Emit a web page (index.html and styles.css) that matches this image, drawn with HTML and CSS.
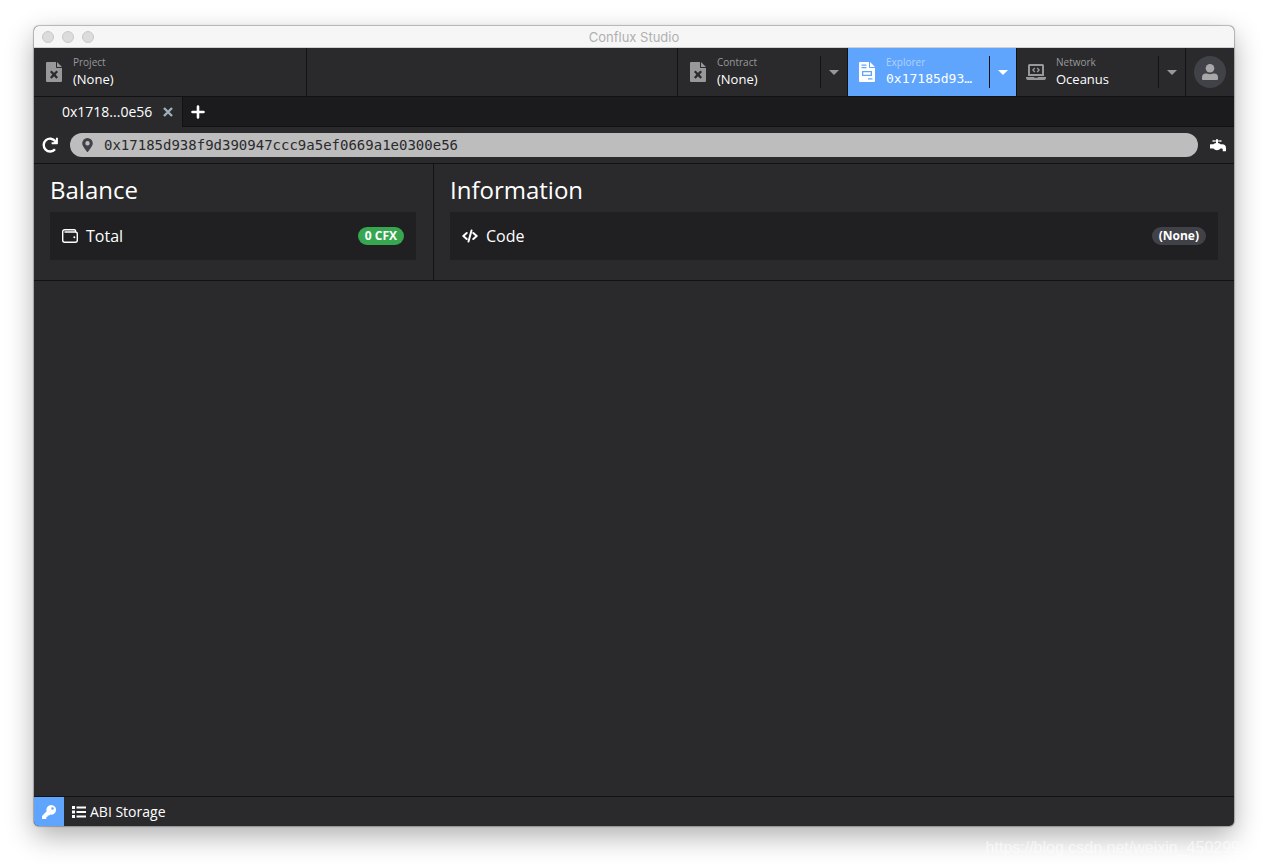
FILE: index.html
```html
<!DOCTYPE html>
<html lang="en">
<head>
<meta charset="utf-8">
<title>Conflux Studio</title>
<link rel="stylesheet" href="styles.css">
</head>
<body>
<svg class="defs" aria-hidden="true">
  <symbol id="file-x" viewBox="0 0 16 20"><path fill-rule="evenodd" d="M1 0h9v5.2c0 .5.3.8.8.8H16v13a1 1 0 0 1-1 1H1a1 1 0 0 1-1-1V1a1 1 0 0 1 1-1zM4 10l2.400 2.600L4 15.200 5.600 16.800 8 14.300l2.400 2.500L12 15.200 9.600 12.600 12 10l-1.600-1.600L8 10.900 5.600 8.400z"/><path d="M11 0l5 5h-5z"/></symbol>
  <symbol id="caret" viewBox="0 0 10 5"><path d="M0 0h10L5 5z"/></symbol>
</svg>
<main class="window">
  <header class="titlebar">
    <div class="lights"><i class="light"></i><i class="light"></i><i class="light"></i></div>
    <h1 class="title">Conflux Studio</h1>
  </header>
  <nav class="navbar">
    <button class="nav-main project">
      <svg class="nav-icon"><use href="#file-x"/></svg>
      <span class="nav-text"><span class="nav-label">Project</span><span class="nav-value">(None)</span></span>
    </button>
    <div class="nav-item push">
      <button class="nav-main">
        <svg class="nav-icon"><use href="#file-x"/></svg>
        <span class="nav-text"><span class="nav-label">Contract</span><span class="nav-value">(None)</span></span>
      </button>
      <button class="nav-caret" aria-label="Contract menu"><svg class="caret"><use href="#caret"/></svg></button>
    </div>
    <div class="nav-item active">
      <button class="nav-main">
        <svg class="nav-icon" viewBox="0 0 16 20"><path fill-rule="evenodd" d="M1 0h9v5.200c0 .5.3.8.8.8H16v13a1 1 0 0 1-1 1H1a1 1 0 0 1-1-1V1a1 1 0 0 1 1-1zM2.500 2.500v1.200h5V2.500zM2.500 5v1.200h5V5zM3 9v5h10V9zM4.300 10.300h7.400v2.400H4.300zM9 16.300v1.200h4.500v-1.200z"/><path d="M11 0l5 5h-5z"/></svg>
        <span class="nav-text"><span class="nav-label">Explorer</span><span class="nav-value mono">0x17185d93…</span></span>
      </button>
      <button class="nav-caret" aria-label="Explorer menu"><svg class="caret"><use href="#caret"/></svg></button>
    </div>
    <div class="nav-item">
      <button class="nav-main network">
        <svg class="nav-icon laptop" viewBox="0 0 20 16"><path fill-rule="evenodd" d="M3.500 0h13A1.500 1.500 0 0 1 18 1.500V12H2V1.500A1.500 1.500 0 0 1 3.500 0zM4 2v8h12V2z"/><path d="M0 13h8l.5.800h3L12 13h8v1a2 2 0 0 1-2 2H2a2 2 0 0 1-2-2z"/><path class="stroke" d="M8.800 4L6.900 6l1.900 2M11.200 4l1.900 2-1.900 2"/></svg>
        <span class="nav-text"><span class="nav-label">Network</span><span class="nav-value">Oceanus</span></span>
      </button>
      <button class="nav-caret" aria-label="Network menu"><svg class="caret"><use href="#caret"/></svg></button>
    </div>
    <div class="account">
      <button class="avatar" aria-label="Account"><svg class="user" viewBox="0 0 16 16"><circle cx="8" cy="4.300" r="4.300"/><path d="M0 16v-2.500a4 4 0 0 1 4-4c1.200 0 2 .7 4 .7s2.800-.7 4-.7a4 4 0 0 1 4 4V15a1 1 0 0 1-1 1H1a1 1 0 0 1-1-1z"/></svg></button>
    </div>
  </nav>
  <div class="tabs">
    <div class="tab">
      <button class="tab-name">0x1718...0e56</button>
      <button class="tab-close" aria-label="Close tab"><svg class="x" viewBox="0 0 10 10"><path d="M1 1l8 8M9 1l-8 8"/></svg></button>
    </div>
    <div class="tabs-rest">
      <button class="tab-add" aria-label="New tab"><svg class="plus" viewBox="0 0 14 14"><path d="M7 1.500v11M1.500 7h11"/></svg></button>
    </div>
  </div>
  <div class="addressbar">
    <button class="tool" aria-label="Refresh"><svg class="refresh" viewBox="0 0 16 16"><path class="arc" d="M13.300 4.300A6.400 6.400 0 1 0 13 12.200"/><path d="M15.900.8v5.700c0 .4-.3.700-.7.700H9.600V5.300h2.300l2-2V.8z"/></svg></button>
    <label class="address">
      <svg class="pin" viewBox="0 0 12 16"><path fill-rule="evenodd" d="M6 0a6 6 0 0 1 6 6c0 2.600-1 3.400-5.400 9.700a.75.75 0 0 1-1.200 0C1 9.400 0 8.600 0 6a6 6 0 0 1 6-6zm0 3.500a2.500 2.500 0 1 0 0 5 2.500 2.500 0 0 0 0-5z"/></svg>
      <input class="address-input" aria-label="Address" value="0x17185d938f9d390947ccc9a5ef0669a1e0300e56">
    </label>
    <button class="tool" aria-label="Faucet"><svg class="faucet" viewBox="0 0 16 13"><path d="M2.500 1.200L6 1.500V1a1 1 0 0 1 2 0v.5l3.500-.3v1.600L8 2.500v1.600c1.200.1 2 .6 2.500 1.200H12a4 4 0 0 1 4 4v2.400a.5.5 0 0 1-.5.5h-2.300a.5.5 0 0 1-.5-.5V10.500c0-.6-.3-.9-.9-.9h-1.400C9.700 10.600 8.500 11.300 7 11.300S4.300 10.600 3.600 9.600H.5a.5.500 0 0 1-.5-.5V5.800a.5.5 0 0 1 .5-.5h3c.6-.6 1.300-1.100 2.500-1.200V2.500l-3.500.3z"/></svg></button>
  </div>
  <div class="panels">
    <section class="panel">
      <h2 class="heading">Balance</h2>
      <div class="row">
        <svg class="row-icon" viewBox="0 0 16 14"><path class="line" d="M13.500 3V1.800C13.500 1.100 13 .7 12.300.7H2.700a2 2 0 0 0-2 2v8.600a2 2 0 0 0 2 2h10.600a2 2 0 0 0 2-2V5a2 2 0 0 0-2-2H3"/><circle cx="12.300" cy="8.200" r="1"/></svg>
        <span class="row-name">Total</span><span class="badge green">0 CFX</span>
      </div>
    </section>
    <section class="panel wide">
      <h2 class="heading">Information</h2>
      <div class="row">
        <svg class="row-icon" viewBox="0 0 16 14"><path class="code" d="M4.700 4L1.300 7l3.400 3M11.300 4L14.700 7l-3.400 3M9.500 1.400l-3 11.200"/></svg>
        <span class="row-name">Code</span><span class="badge">(None)</span>
      </div>
    </section>
  </div>
  <div class="content"></div>
  <footer class="statusbar">
    <button class="key" aria-label="Keypair manager"><svg class="key-icon" viewBox="0 0 16 16"><path fill-rule="evenodd" d="M10.500 0a5.500 5.500 0 1 1-1 10.900L8.300 12H6.500v1.500H5V15.300a.7.700 0 0 1-.7.700H.7a.7.700 0 0 1-.7-.7v-2.700l5.300-5.400A5.500 5.500 0 0 1 10.500 0zM12 2.700a1.400 1.400 0 1 0 0 2.800 1.400 1.400 0 0 0 0-2.800z"/></svg></button>
    <button class="abi"><svg class="list" viewBox="0 0 14 12"><path d="M0 0h3v3H0zM0 4.500h3v3H0zM0 9h3v3H0zM4.500.6H14v1.800H4.500zM4.500 5.100H14v1.800H4.500zM4.500 9.600H14v1.800H4.500z"/></svg>ABI Storage</button>
  </footer>
</main>
<p class="credit">https://blog.csdn.net/weixin_450299</p>
</body>
</html>
```
FILE: styles.css
```css
* { box-sizing: border-box; }

body {
  margin: 0;
  min-height: 100vh;
  padding: 26px 28px 0 34px;
  display: flex;
  flex-direction: column;
  background: #fff;
  color: #fff;
  font: 14px/20px "Open Sans", sans-serif;
  overflow: hidden;
}

button {
  margin: 0;
  padding: 0;
  border: 0;
  background: none;
  color: inherit;
  font: inherit;
  text-align: left;
}

svg { display: block; flex: none; fill: currentColor; }
.defs { position: absolute; width: 0; height: 0; }

.window {
  flex: 1;
  display: flex;
  flex-direction: column;
  margin-right: 6px;
  border-radius: 5px;
  overflow: hidden;
  background: #2a2a2c;
  box-shadow: 0 0 1px 1px rgba(0, 0, 0, .25), 0 10px 28px rgba(0, 0, 0, .32);
}

.titlebar {
  display: grid;
  grid-template-columns: 1fr auto 1fr;
  align-items: center;
  height: 22px;
  padding: 0 8px;
  background: #f6f6f6;
  border-bottom: 1px solid #d0d0d0;
}
.lights { display: flex; gap: 8px; }
.light { width: 12px; height: 12px; border: 1px solid #c8c8c8; border-radius: 50%; background: #dcdcdc; }
.title { margin: 0; color: #b0b0b0; font: 13px/20px Inter, sans-serif; }

.navbar { display: flex; height: 49px; border-bottom: 1px solid #121214; }
.nav-item { display: flex; align-items: center; width: 169px; border-left: 1px solid #121214; }
.push { width: 170px; margin-left: auto; }
.nav-main { flex: 1; min-width: 0; height: 48px; display: flex; align-items: center; gap: 11px; padding: 0 12px 2px 11px; }
.project { flex: none; width: 273px; padding-left: 12px; border-right: 1px solid #121214; }
.push .nav-main { padding-left: 12px; }
.network { gap: 10px; padding-left: 9px; }
.nav-icon { width: 16px; height: 20px; margin-top: 2px; color: #98989b; }
.laptop { width: 20px; height: 16px; }
.stroke { fill: none; stroke: currentColor; stroke-width: 1.3; }
.nav-text { flex: 1; min-width: 0; display: flex; flex-direction: column; }
.nav-label { color: #98989b; font-size: 10px; line-height: 16px; }
.nav-value { font-size: 13px; line-height: 18px; white-space: nowrap; }
.mono { font-family: "DejaVu Sans Mono", monospace; }
.nav-caret { display: flex; align-items: center; justify-content: center; width: 27px; height: 32px; border-left: 1px solid #121214; color: #98989b; }
.caret { width: 10px; height: 5px; }
.active { background: #60a5fd; }
.active .nav-icon, .active .nav-caret { color: #fff; }
.active .nav-label { color: #b0d2fe; }
.account { display: flex; align-items: center; padding: 0 8px; border-left: 1px solid #121214; }
.avatar { display: flex; align-items: center; justify-content: center; width: 32px; height: 32px; border-radius: 50%; background: #414148; color: #a8a8ab; }
.user { width: 16px; height: 16px; }

.tabs { display: flex; height: 30px; }
.tab { display: flex; align-items: center; gap: 11px; padding: 0 9px 0 28px; border-right: 1px solid #121214; }
.tab-close { color: #9fb0ba; }
.x { width: 10px; height: 10px; stroke: currentColor; stroke-width: 2.4; }
.tabs-rest { flex: 1; display: flex; align-items: center; padding: 0 8px; background: #1b1b1d; border-bottom: 1px solid #121214; }
.plus { width: 14px; height: 14px; stroke: currentColor; stroke-width: 2.6; stroke-linecap: round; }

.addressbar { display: flex; align-items: center; gap: 12px; height: 37px; padding: 0 8px; border-bottom: 1px solid #121214; }
.refresh { width: 16px; height: 16px; }
.arc { fill: none; stroke: currentColor; stroke-width: 2.4; }
.address { flex: 1; display: flex; align-items: center; gap: 11px; height: 24px; padding: 0 12px; border-radius: 12px; background: #bdbdbd; }
.pin { width: 11px; height: 14px; color: #414148; }
.address-input { flex: 1; min-width: 0; padding: 0; border: 0; outline: 0; background: none; color: #2a2a2c; font: 14px/20px "DejaVu Sans Mono", monospace; }
.faucet { width: 16px; height: 13px; }

.panels { display: grid; grid-template-columns: 1fr 2fr; border-bottom: 1px solid #121214; }
.panel { padding: 10px 17px 20px 16px; border-right: 1px solid #121214; }
.wide { padding-right: 16px; border-right: 0; }
.heading { margin: 0 0 6px; font-size: 24px; line-height: 32px; font-weight: 400; }
.row { display: flex; align-items: center; gap: 8px; height: 48px; padding: 0 12px; background: #202022; font-size: 16px; }
.row-icon { width: 16px; height: 14px; }
.line { fill: none; stroke: currentColor; stroke-width: 1.4; stroke-linecap: round; }
.code { fill: none; stroke: currentColor; stroke-width: 2; stroke-linecap: round; stroke-linejoin: round; }
.row-name { flex: 1; }
.badge { padding: 0 7px; border-radius: 9px; background: #414148; font-size: 12px; line-height: 18px; font-weight: 700; }
.green { background: #36a651; }

.content { flex: 1; }

.statusbar { display: flex; height: 30px; border-top: 1px solid #121214; }
.key { display: flex; align-items: center; justify-content: center; width: 30px; background: #60a5fd; }
.key-icon { width: 14px; height: 14px; }
.abi { display: flex; align-items: center; gap: 4px; padding: 0 8px; }
.list { width: 14px; height: 12px; }

.credit { z-index: 1; align-self: flex-end; margin: 12px 0 0; height: 30px; color: rgba(255, 255, 255, .6); font: 16px/20px "Liberation Sans", sans-serif; }
```
